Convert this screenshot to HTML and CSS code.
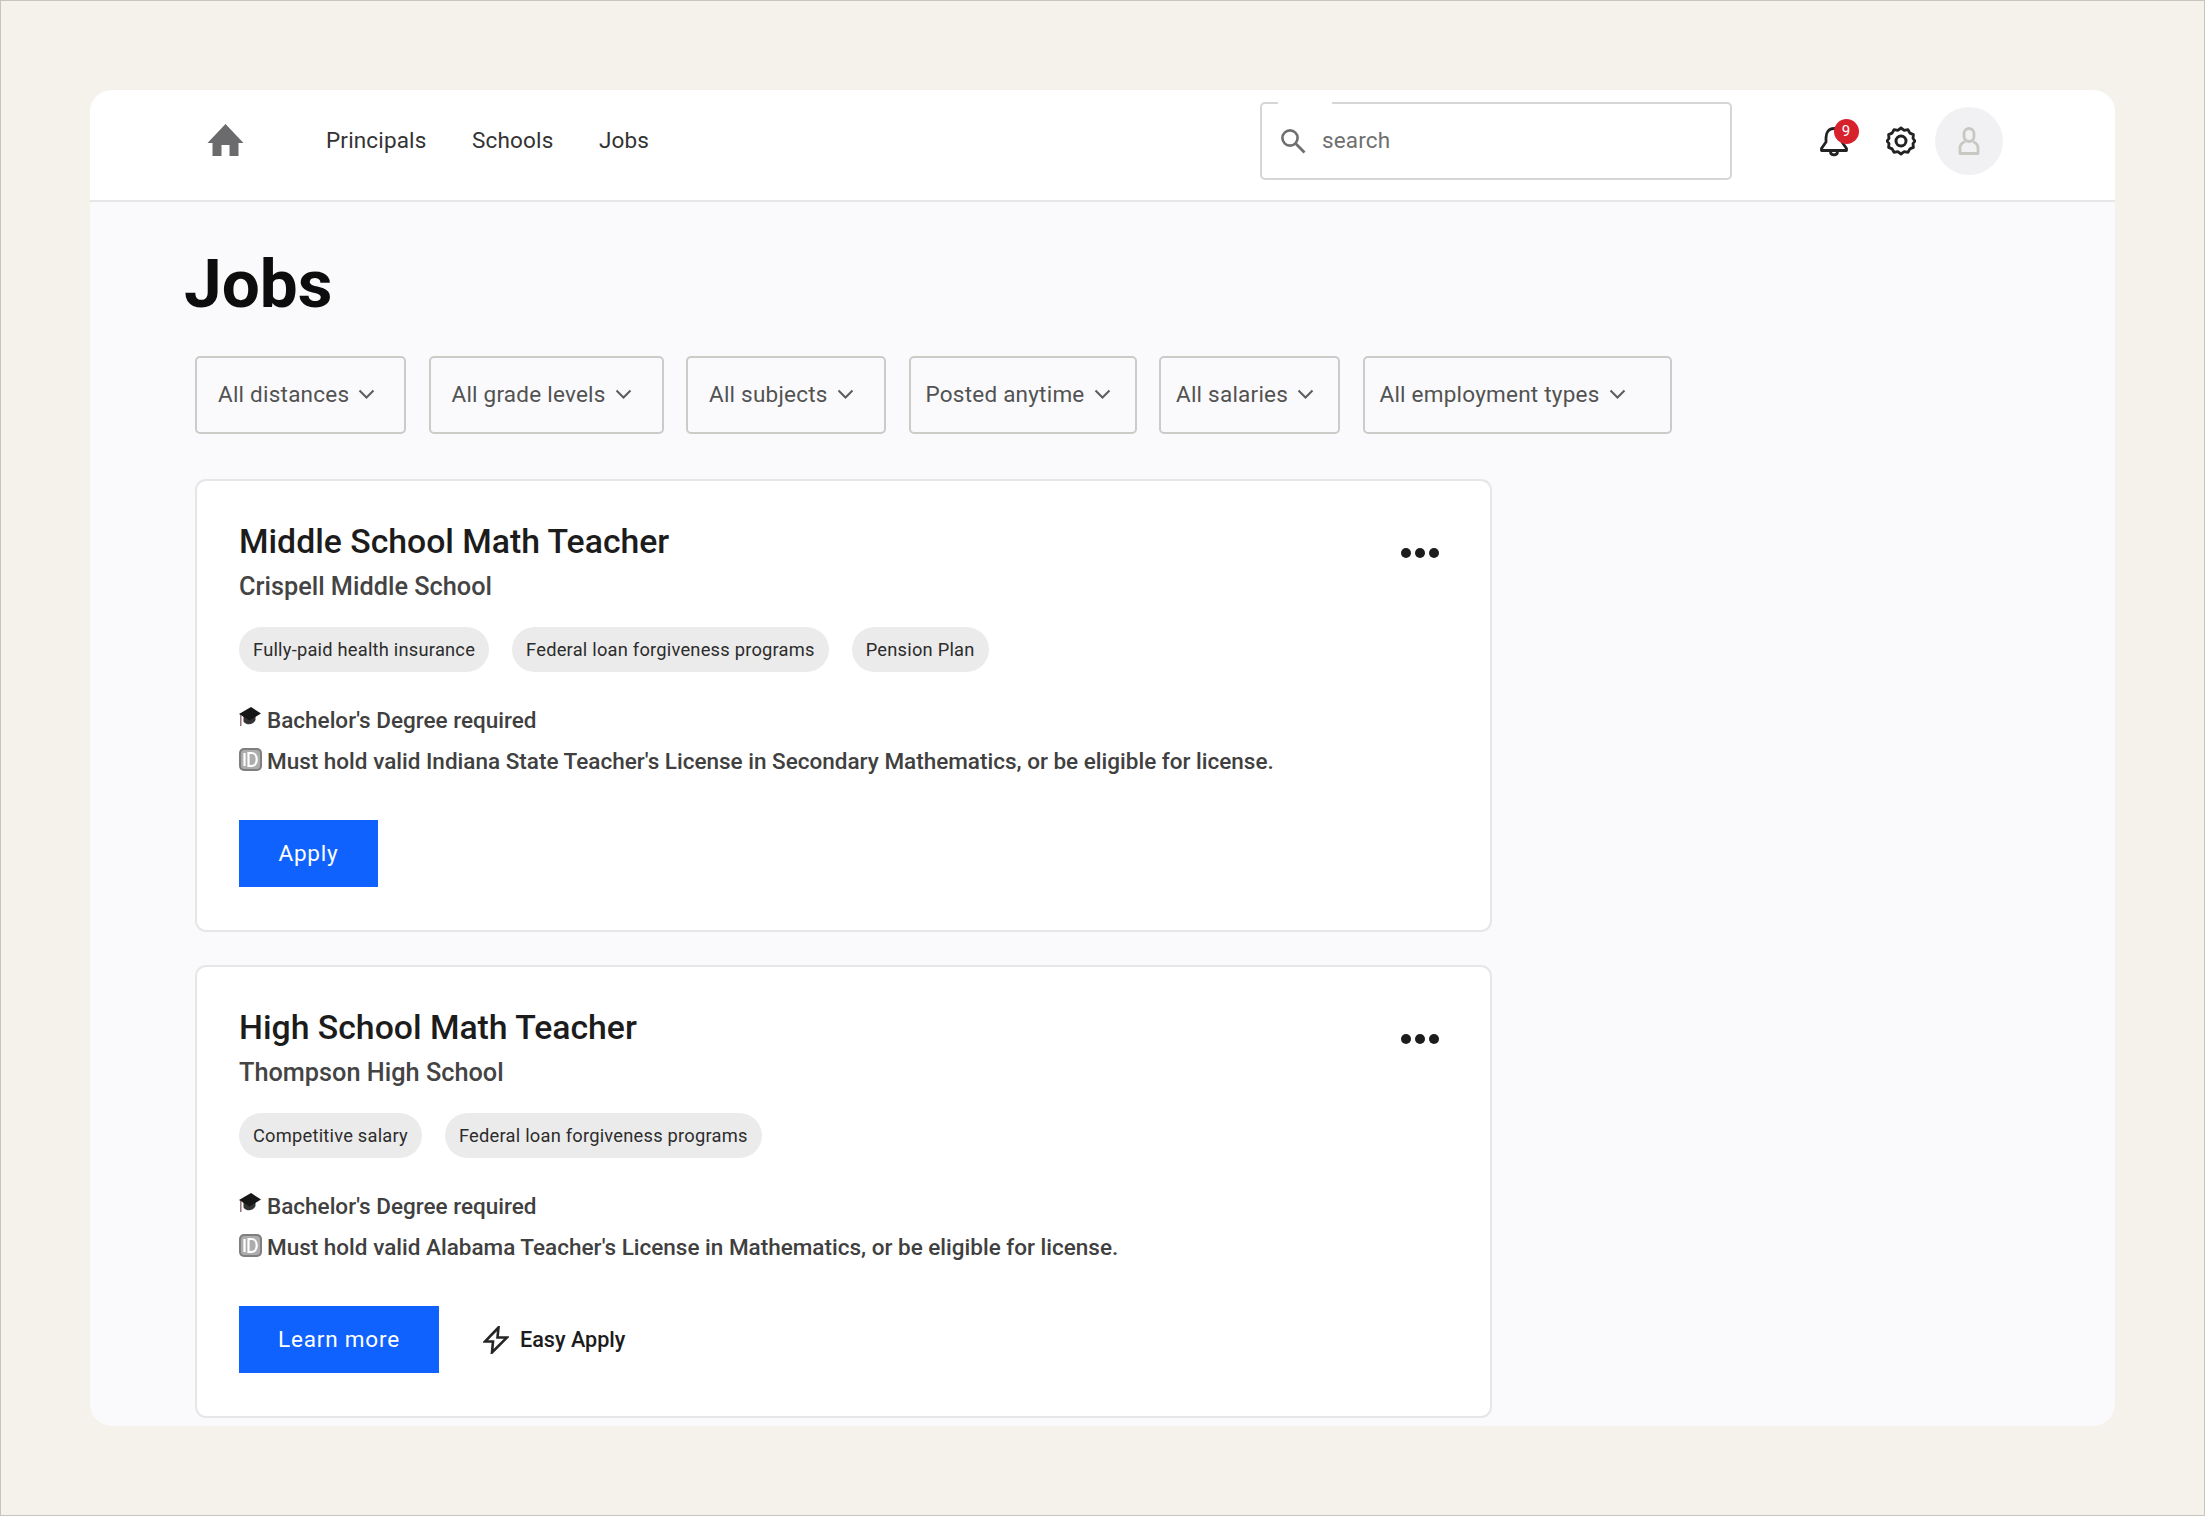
FILE: index.html
```html
<!DOCTYPE html>
<html lang="en">
<head>
    <meta charset="UTF-8">
    <meta name="viewport" content="width=device-width, initial-scale=1.0">
    <title>Jobs</title>
    <link rel="stylesheet" href="styles.css">
</head>
<body>
    <div class="frame">
        <div class="panel">
            <header class="topbar">
                <a class="home" href="#">
                    <svg viewBox="0 0 36 32" width="37" height="32"><path d="M18 0 36 19H31V32H22V21H14V32H5V19H0Z" fill="#6b6a6d"/></svg>
                </a>
                <nav class="nav">
                    <a href="#">Principals</a>
                    <a href="#">Schools</a>
                    <a href="#">Jobs</a>
                </nav>
                <div class="search">
                    <svg viewBox="0 0 26 26" width="26" height="26"><circle cx="10" cy="10" r="7.6" fill="none" stroke="#6f6f6f" stroke-width="2.6"/><path d="M15.6 15.6 24.5 24.5" stroke="#6f6f6f" stroke-width="2.8"/></svg>
                    <span>search</span>
                </div>
                <div class="actions">
                    <div class="bell">
                        <svg viewBox="0 0 30 32" width="30" height="32"><path d="M15 3.5C9.8 3.5 7 7.5 7 12.500V17L2.500 23.500V25.500H27.500V23.500L23 17V12.500C23 7.500 20.200 3.500 15 3.500Z" fill="none" stroke="#222" stroke-width="2.800" stroke-linejoin="round"/><path d="M11.500 26.500C11.500 31 18.500 31 18.500 26.500" fill="none" stroke="#222" stroke-width="2.800"/></svg>
                        <span class="badge">9</span>
                    </div>
                    <svg class="gear" viewBox="0 0 30 30" width="30" height="30"><path d="M15 2 18.200 4.300 22 3.700 23.900 7.100 27.400 8.600 27 12.500 29 15 27 17.500 27.400 21.400 23.900 22.900 22 26.300 18.200 25.700 15 28 11.800 25.700 8 26.300 6.100 22.900 2.600 21.400 3 17.500 1 15 3 12.500 2.600 8.600 6.100 7.100 8 3.700 11.800 4.300Z" fill="none" stroke="#222" stroke-width="2.800" stroke-linejoin="round"/><circle cx="15" cy="15" r="5" fill="none" stroke="#222" stroke-width="3"/></svg>
                    <div class="avatar">
                        <svg viewBox="0 0 22 28" width="22" height="28"><rect x="6" y="1.500" width="10" height="13" rx="5" fill="none" stroke="#c9c7c1" stroke-width="2.800"/><path d="M7 14.500C3.500 16 2 18 2 21V26.500H20V21C20 18 18.500 16 15 14.500" fill="none" stroke="#c9c7c1" stroke-width="2.800" stroke-linejoin="round"/></svg>
                    </div>
                </div>
            </header>

            <main class="content">
                <h1>Jobs</h1>

                <div class="filters">
                    <button class="filter f1">All distances <svg viewBox="0 0 16 10" width="17" height="10"><path d="M1 1.500 8 8.500 15 1.500" fill="none" stroke="#5c5c5c" stroke-width="2"/></svg></button>
                    <button class="filter f2">All grade levels <svg viewBox="0 0 16 10" width="17" height="10"><path d="M1 1.500 8 8.500 15 1.500" fill="none" stroke="#5c5c5c" stroke-width="2"/></svg></button>
                    <button class="filter f3">All subjects <svg viewBox="0 0 16 10" width="17" height="10"><path d="M1 1.500 8 8.500 15 1.500" fill="none" stroke="#5c5c5c" stroke-width="2"/></svg></button>
                    <button class="filter f4">Posted anytime <svg viewBox="0 0 16 10" width="17" height="10"><path d="M1 1.500 8 8.500 15 1.500" fill="none" stroke="#5c5c5c" stroke-width="2"/></svg></button>
                    <button class="filter f5">All salaries <svg viewBox="0 0 16 10" width="17" height="10"><path d="M1 1.500 8 8.500 15 1.500" fill="none" stroke="#5c5c5c" stroke-width="2"/></svg></button>
                    <button class="filter f6">All employment types <svg viewBox="0 0 16 10" width="17" height="10"><path d="M1 1.500 8 8.500 15 1.500" fill="none" stroke="#5c5c5c" stroke-width="2"/></svg></button>
                </div>

                <section class="card">
                    <div class="card-head">
                        <div>
                            <h2>Middle School Math Teacher</h2>
                            <p class="school">Crispell Middle School</p>
                        </div>
                        <div class="dots"><i></i><i></i><i></i></div>
                    </div>
                    <div class="chips">
                        <span>Fully-paid health insurance</span>
                        <span>Federal loan forgiveness programs</span>
                        <span>Pension Plan</span>
                    </div>
                    <p class="req">
                        <svg class="cap" viewBox="0 0 22 22" width="22" height="22"><path d="M4.500 10V15.500C7 19.500 14 19.500 16.500 14V10Z" fill="#333"/><path d="M12 1 22 7.500 10.500 14.500 0 8Z" fill="#161616"/><path d="M1.800 9V20" stroke="#8a6a6a" stroke-width="1.400"/></svg>
                        Bachelor's Degree required
                    </p>
                    <p class="req">
                        <svg class="id" viewBox="0 0 23 23" width="23" height="23"><rect x="0" y="0" width="23" height="23" rx="5" fill="#7f7f7f"/><rect x="2" y="2" width="19" height="19" rx="3.500" fill="#adadad"/><path d="M5.500 5V18M9.500 5H12.500C19.500 5 19.500 18 12.500 18H9.500Z" fill="none" stroke="#fff" stroke-width="2.200"/></svg>
                        Must hold valid Indiana State Teacher's License in Secondary Mathematics, or be eligible for license.
                    </p>
                    <div class="card-actions">
                        <a class="btn btn-apply" href="#">Apply</a>
                    </div>
                </section>

                <section class="card">
                    <div class="card-head">
                        <div>
                            <h2>High School Math Teacher</h2>
                            <p class="school">Thompson High School</p>
                        </div>
                        <div class="dots"><i></i><i></i><i></i></div>
                    </div>
                    <div class="chips">
                        <span>Competitive salary</span>
                        <span>Federal loan forgiveness programs</span>
                    </div>
                    <p class="req">
                        <svg class="cap" viewBox="0 0 22 22" width="22" height="22"><path d="M4.500 10V15.500C7 19.500 14 19.500 16.500 14V10Z" fill="#333"/><path d="M12 1 22 7.500 10.500 14.500 0 8Z" fill="#161616"/><path d="M1.800 9V20" stroke="#8a6a6a" stroke-width="1.400"/></svg>
                        Bachelor's Degree required
                    </p>
                    <p class="req">
                        <svg class="id" viewBox="0 0 23 23" width="23" height="23"><rect x="0" y="0" width="23" height="23" rx="5" fill="#7f7f7f"/><rect x="2" y="2" width="19" height="19" rx="3.500" fill="#adadad"/><path d="M5.500 5V18M9.500 5H12.500C19.500 5 19.500 18 12.500 18H9.500Z" fill="none" stroke="#fff" stroke-width="2.200"/></svg>
                        Must hold valid Alabama Teacher's License in Mathematics, or be eligible for license.
                    </p>
                    <div class="card-actions">
                        <a class="btn btn-learn" href="#">Learn more</a>
                        <a class="easy" href="#">
                            <svg viewBox="0 0 26 28" width="26" height="28"><path d="M15.500 1.500 2 15.500H10L9 26.500 24 11.500H14.500Z" fill="none" stroke="#262626" stroke-width="2.600" stroke-linejoin="miter"/></svg>
                            Easy Apply
                        </a>
                    </div>
                </section>
            </main>
        </div>
    </div>
</body>
</html>
```

FILE: styles.css
```css
:root {
    --page-bg: #f5f2eb;
    --panel-bg: #fafafc;
    --border-color: #c8c5bf;
    --card-border: #e6e6e8;
    --primary-color: #0f62fe;
}

* {
    box-sizing: border-box;
}

body {
    margin: 0;
    font-family: Roboto, "Liberation Sans", sans-serif;
    color: #161616;
}

a {
    color: inherit;
    text-decoration: none;
}

.frame {
    height: 1516px;
    padding: 89px;
    background: var(--page-bg);
    border: 1px solid var(--border-color);
}

.panel {
    height: 1336px;
    overflow: hidden;
    border-radius: 22px;
    background: var(--panel-bg);
}

.topbar {
    display: flex;
    align-items: center;
    height: 112px;
    padding: 0 112px 9px 117px;
    background: #fff;
    border-bottom: 2px solid #e6e6e6;
}

.home {
    display: flex;
    width: 119px;
    margin-top: -2px;
}

.nav {
    display: flex;
    gap: 45.5px;
    margin-top: -2px;
    font-size: 22.5px;
    letter-spacing: 0.16px;
    color: #333;
}

.search {
    display: flex;
    align-items: center;
    gap: 16px;
    position: relative;
    width: 472px;
    height: 78px;
    margin-left: auto;
    padding-left: 18px;
    background: #fff;
    border: 2px solid #d6d6d6;
    border-radius: 5px;
    font-size: 22.5px;
    letter-spacing: 0.16px;
    color: #6f6f6f;
}

.search span {
    margin-top: -2px;
}

.search::before {
    content: "";
    position: absolute;
    top: -2px;
    left: 16px;
    width: 54px;
    height: 2px;
    background: #fff;
}

.actions {
    display: flex;
    align-items: center;
    margin-left: 86.5px;
}

.bell {
    position: relative;
    display: flex;
}

.badge {
    position: absolute;
    top: -6px;
    left: 15px;
    width: 25px;
    height: 25px;
    border-radius: 50%;
    background: #d7222e;
    color: #fff;
    font-size: 15px;
    line-height: 25px;
    text-align: center;
}

.gear {
    margin-left: 37.5px;
}

.avatar {
    display: flex;
    align-items: center;
    justify-content: center;
    width: 68px;
    height: 68px;
    margin-left: 19px;
    border-radius: 50%;
    background: #f1f1f3;
}

.content {
    padding: 0 0 0 105px;
}

h1 {
    margin: 42px 0 32px -11px;
    font-size: 67.5px;
    line-height: 80px;
    font-weight: 700;
    color: #0d0d0d;
}

.filters {
    display: flex;
    gap: 22.5px;
    margin-bottom: 45px;
}

.filter {
    display: flex;
    align-items: center;
    height: 78px;
    padding: 0 0 2px;
    background: var(--panel-bg);
    border: 2px solid #cdcbc8;
    border-radius: 5px;
    font-family: inherit;
    font-size: 22.5px;
    letter-spacing: 0.225px;
    color: #525252;
}

.filter svg {
    margin-left: 9px;
}

.f1 { width: 211px; padding-left: 21px; }
.f2 { width: 235px; padding-left: 21px; }
.f3 { width: 200px; padding-left: 21px; }
.f4 { width: 228px; padding-left: 15px; }
.f5 { width: 181px; padding-left: 15px; }
.f6 { width: 309px; padding-left: 15px; }

.card {
    width: 1297px;
    height: 453px;
    margin-bottom: 33px;
    padding: 39px 42px 0;
    background: #fff;
    border: 2px solid var(--card-border);
    border-radius: 11px;
}

.card-head {
    display: flex;
    justify-content: space-between;
    align-items: flex-start;
}

h2 {
    margin: 0;
    font-size: 33.75px;
    line-height: 44px;
    font-weight: 500;
    color: #1c1c1c;
}

.school {
    margin: 1px 0 0;
    font-size: 25.3px;
    line-height: 44px;
    font-weight: 500;
    color: #444;
}

.dots {
    display: flex;
    gap: 4px;
    margin: 28px 9px 0 0;
}

.dots i {
    width: 10px;
    height: 10px;
    border-radius: 50%;
    background: #1c1c1c;
}

.chips {
    display: flex;
    gap: 23px;
    margin: 18px 0 27px;
}

.chips span {
    height: 45px;
    padding: 0 14px;
    border-radius: 23px;
    background: #ebebeb;
    font-size: 18.3px;
    line-height: 45px;
    letter-spacing: 0.225px;
    color: #2c2c2c;
}

.req {
    display: flex;
    align-items: center;
    gap: 6px;
    height: 41px;
    margin: 0;
    font-size: 22.5px;
    font-weight: 500;
    color: #404040;
}

.req .cap {
    margin: -6px 0 0 0;
}

.req .id {
    margin: -2px -1px 0 0;
}

.card-actions {
    display: flex;
    align-items: center;
    margin-top: 39px;
}

.btn {
    display: flex;
    align-items: center;
    justify-content: center;
    height: 67px;
    padding-bottom: 2px;
    background: var(--primary-color);
    color: #fff;
    font-size: 22.5px;
    letter-spacing: 0.8px;
}

.btn-apply {
    width: 139px;
}

.btn-learn {
    width: 200px;
}

.easy {
    display: flex;
    align-items: center;
    gap: 11px;
    margin-left: 44px;
    font-size: 21.6px;
    font-weight: 500;
    color: #1c1c1c;
}
```
